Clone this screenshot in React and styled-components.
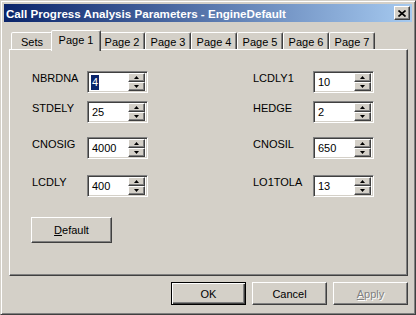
import React from 'react';
import styled, { createGlobalStyle, css } from 'styled-components';

const GlobalStyle = createGlobalStyle`
  html, body {
    margin: 0;
    padding: 0;
    background: #d4d0c8;
  }
  * {
    box-sizing: border-box;
  }
`;

const raised = css`
  border: 1px solid;
  border-color: #ffffff #404040 #404040 #ffffff;
  box-shadow: inset -1px -1px #808080, inset 1px 1px #d4d0c8;
`;

const Window = styled.div`
  width: 416px;
  height: 315px;
  background: #d4d0c8;
  border: 1px solid;
  border-color: #d4d0c8 #404040 #404040 #d4d0c8;
  box-shadow: inset 1px 1px #ffffff, inset -1px -1px #808080;
  padding: 3px;
  display: flex;
  flex-direction: column;
  font-family: "Liberation Sans", Arial, sans-serif;
  font-size: 11px;
  color: #000;
`;

const TitleBar = styled.div`
  height: 18px;
  display: flex;
  align-items: center;
  justify-content: space-between;
  padding-left: 2px;
  background: linear-gradient(to right, #0a246a, #a6caf0);
`;

const Title = styled.span`
  color: #fff;
  font-weight: bold;
  font-size: 11.6px;
  white-space: nowrap;
`;

const CloseButton = styled.div`
  ${raised};
  width: 16px;
  height: 14px;
  margin-right: 2px;
  background: #d4d0c8;
  display: flex;
  align-items: center;
  justify-content: center;
`;

const TabStrip = styled.div`
  height: 19px;
  margin-top: 8px;
  margin-left: 7px;
  display: flex;
  align-items: flex-end;
`;

const Tab = styled.div`
  width: ${p => p.$width}px;
  height: 17px;
  background: #d4d0c8;
  border: 1px solid;
  border-bottom: none;
  border-color: #ffffff #404040 transparent #ffffff;
  border-radius: 2px 2px 0 0;
  box-shadow: inset -1px 0 #808080;
  display: flex;
  align-items: center;
  justify-content: center;
  padding-top: 1px;
  white-space: nowrap;

  ${p => p.$active && css`
    position: relative;
    z-index: 1;
    width: ${p.$width + 4}px;
    height: 21px;
    margin: 0 -2px -2px;
    padding-top: 0;
    padding-bottom: 3px;
  `}
`;

const Panel = styled.div`
  margin-left: 5px;
  width: 399px;
  height: 227px;
  border: 1px solid;
  border-color: #ffffff #404040 #404040 #ffffff;
  box-shadow: inset -1px -1px #808080;
  padding: 21px 0 0 21px;
  display: flex;
  flex-direction: column;
  align-items: flex-start;
`;

const FieldRow = styled.div`
  display: grid;
  grid-template-columns: 55px 61px 105px 60px 61px;
  align-items: start;
  margin-top: ${p => p.$space}px;
  padding-left: 1px;
`;

const Label = styled.span`
  line-height: 14px;
`;

const SpinBox = styled.div`
  width: 61px;
  height: 22px;
  background: #fff;
  border: 1px solid;
  border-color: #808080 #ffffff #ffffff #808080;
  box-shadow: inset 1px 1px #404040, inset -1px -1px #d4d0c8;
  display: flex;
  align-items: center;
  justify-content: space-between;
  padding: 2px 2px 2px 3px;
`;

const Value = styled.span`
  line-height: 15px;
  padding: 0 1px;
  background: ${p => (p.$selected ? '#0a246a' : 'transparent')};
  color: ${p => (p.$selected ? '#fff' : '#000')};
`;

const SpinButtons = styled.div`
  display: flex;
  flex-direction: column;
  gap: 0;
`;

const SpinButton = styled.div`
  ${raised};
  width: 17px;
  height: 9px;
  background: #d4d0c8;
  display: flex;
  align-items: center;
  justify-content: center;
`;

const PushButton = styled.div`
  ${raised};
  width: ${p => p.$width || 75}px;
  height: ${p => p.$height || 23}px;
  background: #d4d0c8;
  display: flex;
  align-items: center;
  justify-content: center;
  color: ${p => (p.$disabled ? '#808080' : '#000')};
  text-shadow: ${p => (p.$disabled ? '1px 1px #ffffff' : 'none')};

  ${p => p.$default && css`
    border: 1px solid #000;
    box-shadow: inset 1px 1px #ffffff, inset -1px -1px #404040, inset -2px -2px #808080;
  `}
`;

const DefaultButton = styled(PushButton)`
  margin-top: 20px;
  margin-left: 0;
`;

const ButtonRow = styled.div`
  display: flex;
  justify-content: flex-end;
  gap: 6px;
  margin-top: 6px;
  padding-right: 4px;
`;

const Arrow = ({ up }) => (
  <svg width="5" height="3" viewBox="0 0 5 3">
    <polygon points={up ? '2.5,0 5,3 0,3' : '0,0 5,0 2.5,3'} fill="#000" />
  </svg>
);

const Spin = ({ value, selected }) => (
  <SpinBox>
    <Value $selected={selected}>{value}</Value>
    <SpinButtons>
      <SpinButton><Arrow up /></SpinButton>
      <SpinButton><Arrow /></SpinButton>
    </SpinButtons>
  </SpinBox>
);

const tabs = [
  { label: 'Sets', width: 42 },
  { label: 'Page 1', width: 46, active: true },
  { label: 'Page 2', width: 46 },
  { label: 'Page 3', width: 46 },
  { label: 'Page 4', width: 46 },
  { label: 'Page 5', width: 46 },
  { label: 'Page 6', width: 46 },
  { label: 'Page 7', width: 46 },
];

const rows = [
  { space: 0, left: ['NBRDNA', '4'], right: ['LCDLY1', '10'] },
  { space: 8, left: ['STDELY', '25'], right: ['HEDGE', '2'] },
  { space: 14, left: ['CNOSIG', '4000'], right: ['CNOSIL', '650'] },
  { space: 16, left: ['LCDLY', '400'], right: ['LO1TOLA', '13'] },
];

export default function App() {
  return (
    <>
      <GlobalStyle />
      <Window>
        <TitleBar>
          <Title>Call Progress Analysis Parameters - EngineDefault</Title>
          <CloseButton>
            <svg width="8" height="7" viewBox="0 0 8 7">
              <path d="M0.5 0.5 L7.5 6.5 M7.5 0.5 L0.5 6.5" stroke="#000" strokeWidth="1.6" />
            </svg>
          </CloseButton>
        </TitleBar>
        <TabStrip>
          {tabs.map(t => (
            <Tab key={t.label} $width={t.width} $active={t.active}>{t.label}</Tab>
          ))}
        </TabStrip>
        <Panel>
          {rows.map((r, i) => (
            <FieldRow key={i} $space={r.space}>
              <Label>{r.left[0]}</Label>
              <Spin value={r.left[1]} selected={i === 0} />
              <span />
              <Label>{r.right[0]}</Label>
              <Spin value={r.right[1]} />
            </FieldRow>
          ))}
          <DefaultButton $width={81} $height={26}>
            <span><u>D</u>efault</span>
          </DefaultButton>
        </Panel>
        <ButtonRow>
          <PushButton $default>OK</PushButton>
          <PushButton>Cancel</PushButton>
          <PushButton $disabled><span><u>A</u>pply</span></PushButton>
        </ButtonRow>
      </Window>
    </>
  );
}
